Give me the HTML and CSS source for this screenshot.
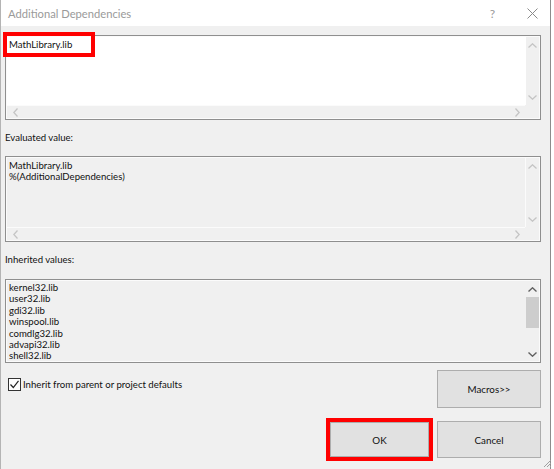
FILE: index.html
```html
<!DOCTYPE html>
<html>
<head>
<meta charset="utf-8">
<link rel="stylesheet" href="styles.css">
</head>
<body>
<div class="window">
  <div class="titlebar">
    <span class="title">Additional Dependencies</span>
    <span class="help">?</span>
    <svg class="close" width="11" height="11" viewBox="0 0 11 11"><path d="M0.5 0.5L10.5 10.5M10.5 0.5L0.5 10.5" stroke="#8a8a8a" stroke-width="1" fill="none"/></svg>
  </div>
  <div class="body">
    <div class="box box-edit">
      <div class="content"><div class="line">MathLibrary.lib</div></div>
      <div class="vscroll">
        <svg class="chev" width="9" height="5" viewBox="0 0 9 5"><path d="M0.5 4.5L4.5 0.8L8.5 4.5" stroke="#c4c4c4" stroke-width="1.3" fill="none"/></svg>
        <svg class="chev" width="9" height="5" viewBox="0 0 9 5"><path d="M0.5 0.5L4.5 4.2L8.5 0.5" stroke="#c4c4c4" stroke-width="1.3" fill="none"/></svg>
      </div>
      <div class="hscroll">
        <svg class="chev" width="5" height="9" viewBox="0 0 5 9"><path d="M4.5 0.5L0.8 4.5L4.5 8.5" stroke="#c4c4c4" stroke-width="1.3" fill="none"/></svg>
        <svg class="chev" width="5" height="9" viewBox="0 0 5 9"><path d="M0.5 0.5L4.2 4.5L0.5 8.5" stroke="#c4c4c4" stroke-width="1.3" fill="none"/></svg>
      </div>
      <div class="corner"></div>
      <div class="mark mark-edit"></div>
    </div>
    <div class="label">Evaluated value:</div>
    <div class="box box-ro">
      <div class="content">
        <div class="line">MathLibrary.lib</div>
        <div class="line">%(AdditionalDependencies)</div>
      </div>
      <div class="vscroll">
        <svg class="chev" width="9" height="5" viewBox="0 0 9 5"><path d="M0.5 4.5L4.5 0.8L8.5 4.5" stroke="#c4c4c4" stroke-width="1.3" fill="none"/></svg>
        <svg class="chev" width="9" height="5" viewBox="0 0 9 5"><path d="M0.5 0.5L4.5 4.2L8.5 0.5" stroke="#c4c4c4" stroke-width="1.3" fill="none"/></svg>
      </div>
      <div class="hscroll">
        <svg class="chev" width="5" height="9" viewBox="0 0 5 9"><path d="M4.5 0.5L0.8 4.5L4.5 8.5" stroke="#c4c4c4" stroke-width="1.3" fill="none"/></svg>
        <svg class="chev" width="5" height="9" viewBox="0 0 5 9"><path d="M0.5 0.5L4.2 4.5L0.5 8.5" stroke="#c4c4c4" stroke-width="1.3" fill="none"/></svg>
      </div>
      <div class="corner"></div>
    </div>
    <div class="label label2">Inherited values:</div>
    <div class="box box-list">
      <div class="content">
        <div class="line">kernel32.lib</div>
        <div class="line">user32.lib</div>
        <div class="line">gdi32.lib</div>
        <div class="line">winspool.lib</div>
        <div class="line">comdlg32.lib</div>
        <div class="line">advapi32.lib</div>
        <div class="line">shell32.lib</div>
      </div>
      <div class="vscroll vscroll-active">
        <svg class="chev" width="9" height="5" viewBox="0 0 9 5"><path d="M0.5 4.5L4.5 0.8L8.5 4.5" stroke="#606060" stroke-width="1.4" fill="none"/></svg>
        <div class="thumb"></div>
        <svg class="chev" width="9" height="5" viewBox="0 0 9 5"><path d="M0.5 0.5L4.5 4.2L8.5 0.5" stroke="#606060" stroke-width="1.4" fill="none"/></svg>
      </div>
    </div>
    <div class="row-macros">
      <label class="check">
        <span class="checkbox"><svg width="11" height="11" viewBox="0 0 11 11"><path d="M1.5 5.5L4.3 8.5L9.5 1.8" stroke="#222" stroke-width="1.2" fill="none"/></svg></span>
        <span>Inherit from parent or project defaults</span>
      </label>
      <button class="btn btn-macros">Macros&gt;&gt;</button>
    </div>
    <div class="row-buttons">
      <div class="ok-wrap"><button class="btn btn-ok">OK</button></div>
      <button class="btn btn-cancel">Cancel</button>
    </div>
    <svg class="grip" width="10" height="10" viewBox="0 0 10 10"><path d="M9 2L2 9M9 5L5 9M9 8L8 9" stroke="#a0a0a0" stroke-width="1" fill="none"/></svg>
  </div>
</div>
</body>
</html>
```
FILE: styles.css
```css
html, body {
  margin: 0;
  padding: 0;
  background: #ffffff;
}
body {
  width: 554px;
  height: 469px;
  overflow: hidden;
  font-family: "Lato", "Noto Sans", sans-serif;
  font-size: 9.6px;
  color: #111;
}
.window {
  width: 551px;
  height: 469px;
  box-sizing: border-box;
  border-left: 1px solid #b4b4b4;
  border-right: 1px solid #8c8c8c;
  display: flex;
  flex-direction: column;
  background: #f0f0f0;
}
.titlebar {
  height: 26px;
  flex: none;
  background: #fff;
  display: flex;
  align-items: center;
  padding-left: 7px;
  padding-right: 12px;
}
.title {
  font-size: 11.2px;
  color: #9a9a9a;
  flex: 1;
}
.help {
  font-size: 12px;
  color: #9a9a9a;
  margin-right: 32px;
}
.close {
  display: block;
}
.body {
  flex: 1;
  position: relative;
  padding: 9px 9px 0 4px;
  display: flex;
  flex-direction: column;
}
.box {
  position: relative;
  flex: none;
  border: 1px solid #8f8f8f;
  box-shadow: inset 0 0 0 1px #fbfbfb;
  display: grid;
  grid-template-columns: 1fr 15px;
  grid-template-rows: 1fr 14px;
  box-sizing: border-box;
}
.box-edit {
  height: 85px;
  background: #fff;
}
.box-ro {
  height: 86px;
  background: #f0f0f0;
}
.box-list {
  height: 84px;
  background: #f0f0f0;
  grid-template-rows: 1fr;
}
.content {
  padding: 2px 3px;
  line-height: 11.4px;
  overflow: hidden;
}
.box-edit .content {
  padding-top: 3px;
}
.box-ro .content {
  padding-top: 3px;
}
.box-list .content {
  padding-top: 2px;
}
.line {
  white-space: nowrap;
  height: 11.4px;
}
.vscroll {
  background: #f0f0f0;
  display: flex;
  flex-direction: column;
  align-items: center;
  justify-content: space-between;
  padding: 6px 0 5px;
  margin: 1px 1px 0 0;
}
.box-edit .vscroll {
  border-left: 1px solid #fff;
}
.box-ro .vscroll {
  border-left: 1px solid #fbfbfb;
}
.vscroll-active {
  padding: 6px 0 4px;
  margin: 1px 1px 1px 0;
  justify-content: flex-start;
}
.vscroll-active .thumb {
  width: 13px;
  height: 31px;
  background: #cdcdcd;
  margin-top: 5px;
  margin-bottom: auto;
}
.hscroll {
  background: #f0f0f0;
  display: flex;
  align-items: center;
  justify-content: space-between;
  padding: 0 5px 0 6px;
  margin-left: 1px;
  margin-bottom: 1px;
  border-top: 1px solid #fbfbfb;
}
.corner {
  background: #f0f0f0;
  margin: 0 1px 1px 0;
}
.chev {
  display: block;
}
.label {
  flex: none;
  margin-top: 11px;
  height: 25px;
  line-height: 14px;
}
.label2 {
  height: 26px;
}
.mark {
  position: absolute;
  border: 4px solid #ff0000;
  pointer-events: none;
}
.mark-edit {
  left: -3px;
  top: -4px;
  width: 84px;
  height: 17px;
}
.row-macros {
  flex: none;
  display: flex;
  align-items: flex-start;
  justify-content: space-between;
  margin-top: 7px;
}
.check {
  display: flex;
  align-items: center;
  gap: 2px;
  padding-left: 3px;
  margin-top: 8px;
}
.checkbox {
  width: 11px;
  height: 11px;
  border: 1px solid #333;
  background: #fff;
  display: flex;
  align-items: center;
  justify-content: center;
}
.checkbox svg {
  display: block;
}
.btn {
  font-family: inherit;
  font-size: 9.8px;
  color: #111;
  background: #e1e1e1;
  border: 1px solid #adadad;
  width: 104px;
  height: 38px;
  margin: 0;
  padding: 0;
}
.row-buttons {
  flex: none;
  display: flex;
  justify-content: flex-end;
  align-items: center;
  gap: 4px;
  margin-top: 10px;
}
.ok-wrap {
  border: 4px solid #ff0000;
  padding: 0;
}
.btn-ok {
  width: 99px;
  height: 35px;
  display: block;
}
.btn-cancel {
  height: 37px;
}
.grip {
  position: absolute;
  right: -2px;
  bottom: 1px;
}
```
